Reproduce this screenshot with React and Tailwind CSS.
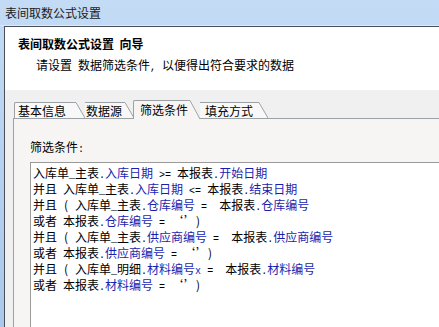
import React from "react";

const BLUE = "text-[#1a1eb0]";

// each line: [text, kind]  kind: 0 black, 1 blue, 2 quotes box, 3 paren cell
const lines = [
  [["入库单_主表."], ["入库日期", 1], [" >= 本报表."], ["开始日期", 1]],
  [["并且 入库单_主表."], ["入库日期", 1], [" <= 本报表."], ["结束日期", 1]],
  [["并且 "], ["(", 3], ["入库单_主表."], ["仓库编号", 1], [" =  本报表."], ["仓库编号", 1]],
  [["或者 本报表."], ["仓库编号", 1], [" = "], ["", 2], [")", 3]],
  [["并且 "], ["(", 3], ["入库单_主表."], ["供应商编号", 1], [" =  本报表."], ["供应商编号", 1]],
  [["或者 本报表."], ["供应商编号", 1], [" = "], ["", 2], [")", 3]],
  [["并且 "], ["(", 3], ["入库单_明细."], ["材料编号x", 1], [" =  本报表."], ["材料编号", 1]],
  [["或者 本报表."], ["材料编号", 1], [" = "], ["", 2], [")", 3]],
];

const tabs = [
  { label: "基本信息", box: "ml-[1px] border-l rounded-tl-[2px] pl-[3px] pr-[10px]" },
  { label: "数据源", box: "pl-[1px] pr-[3px]" },
  { label: "筛选条件", box: "border-l rounded-tl-[2px] pl-[6px] pr-[2px]", active: true, wrap: "-ml-[1px]" },
  { label: "填充方式", box: "pl-[5px] pr-[6px]" },
];

// ascii runs get half-width cells, like the old bitmap font
function Half({ text }) {
  const parts = text.split(/([\x20-\x7e]+)/);
  return parts.map((p, i) =>
    /^[\x20-\x7e]+$/.test(p) ? (
      <span key={i} className="font-['Liberation_Mono',monospace] text-[10px]">
        {p}
      </span>
    ) : (
      p
    )
  );
}

function Slant({ w, h, fill }) {
  return (
    <svg width={w} height={h} className="block shrink-0">
      <polygon points={`0,0 0.5,0 ${w},${h} 0,${h}`} fill={fill} />
      <line x1="0" y1="0.5" x2={w} y2={h} stroke="#9ca1a6" />
    </svg>
  );
}

function Tab({ label, box, active, wrap = "" }) {
  return (
    <div className={["flex", active ? "relative z-10 -mb-px h-[19px]" : "h-[16px]", wrap].join(" ")}>
      <div
        className={[
          "flex items-center border-t border-[#9ca1a6] leading-[16px]",
          active ? "bg-[#f6f5f3]" : "bg-[#f8f8f8]",
          box,
        ].join(" ")}
      >
        {label}
      </div>
      {active ? <Slant w={10} h={19} fill="#f6f5f3" /> : <Slant w={9} h={16} fill="#f8f8f8" />}
    </div>
  );
}

function Seg({ text, kind }) {
  if (kind === 2) {
    return (
      <span className="inline-flex w-[24px]">
        <span className="w-[12px] pr-[4px] text-right">‘</span>
        <span className="w-[12px] pl-[1px] text-left">’</span>
      </span>
    );
  }
  if (kind === 3) {
    return <span className="inline-block w-[12px] pl-[1px] text-left">{text}</span>;
  }
  return (
    <span className={kind === 1 ? BLUE : ""}>
      <Half text={text} />
    </span>
  );
}

export default function App() {
  return (
    <div className="flex h-[327px] w-[439px] flex-col overflow-hidden bg-gradient-to-b from-[#c3dbf5] to-[#a9c8eb] font-['Noto_Sans_CJK_SC',sans-serif] text-[12px] leading-[16px] text-black">
      <div className="flex h-[26px] shrink-0 items-center border-b border-[#dbe8f7] pl-[5px] text-[#1b1b1b]">
        表间取数公式设置
      </div>

      <div className="ml-[4px] flex flex-1 flex-col border-l border-t border-[#4b4f58] bg-[#f0f0f0]">
        <div className="h-[63px] shrink-0 bg-white pl-[13px] pt-[9px]">
          <div className="font-bold">表间取数公式设置&nbsp;&nbsp;向导</div>
          <div className="mt-[5px] whitespace-pre pl-[18px]">
            <Half text="请设置 数据筛选条件, 以便得出符合要求的数据" />
          </div>
        </div>

        <div className="flex flex-1 flex-col pl-[8px] pt-[10px]">
          <div className="flex h-[18px] shrink-0 items-end">
            {tabs.map((t) => (
              <Tab key={t.label} {...t} />
            ))}
          </div>

          <div className="flex flex-1 flex-col border-l border-t border-[#9ca1a6] bg-[#f6f5f3] pl-[16px] pt-[20px]">
            <div className="whitespace-pre">
              <Half text="筛选条件:" />
            </div>
            <div className="mt-[4px] flex-1 border-l border-t border-[#9a9a9a] bg-white pl-[2px] pt-[2px]">
              {lines.map((line, i) => (
                <div key={i} className="h-[16px] whitespace-pre">
                  {line.map(([text, kind], j) => (
                    <Seg key={j} text={text} kind={kind} />
                  ))}
                </div>
              ))}
            </div>
          </div>
        </div>
      </div>
    </div>
  );
}
